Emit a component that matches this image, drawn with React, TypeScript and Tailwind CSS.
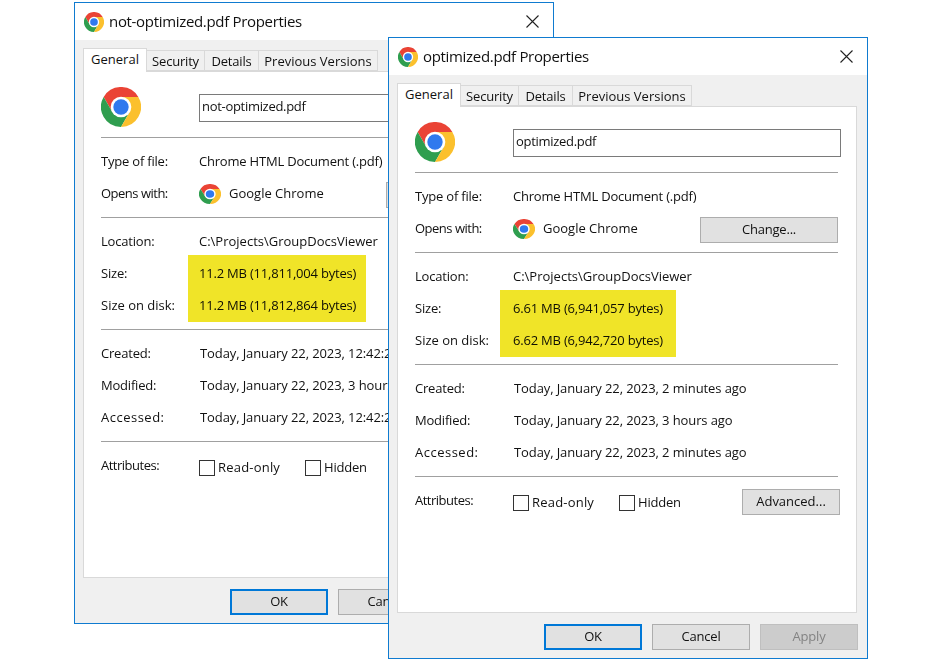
import React from "react";

function ChromeIcon({ className }: { className: string }) {
  return (
    <svg viewBox="0 0 48 48" className={className} preserveAspectRatio="none">
      <path d="M3.2 12A24 24 0 0 1 44.8 12L24 12L13.6 30Z" fill="#ea4335" />
      <path d="M3.2 12A24 24 0 0 0 24 48L34.4 30L13.6 30Z" fill="#2f9e4f" />
      <path d="M44.8 12A24 24 0 0 1 24 48L34.4 30L24 12Z" fill="#fbc02d" />
      <circle cx="24" cy="24" r="12.4" fill="#fff" />
      <circle cx="24" cy="24" r="9.2" fill="#3079ee" />
    </svg>
  );
}

function Row({
  label,
  labelClass = "",
  valueClass = "",
  children,
}: {
  label: string;
  labelClass?: string;
  valueClass?: string;
  children: React.ReactNode;
}) {
  return (
    <div className="grid h-8 grid-cols-[98px_1fr] items-center">
      <span className={labelClass}>{label}</span>
      <span className={`whitespace-nowrap ${valueClass}`}>{children}</span>
    </div>
  );
}

function Sep() {
  return <div className="h-px w-[423px] bg-[#a0a0a0]" />;
}

function WinButton({ label, className = "" }: { label: string; className?: string }) {
  return (
    <div className={`flex items-center justify-center border border-[#adadad] bg-[#e1e1e1] ${className}`}>
      {label}
    </div>
  );
}

function Checkbox({ label, className = "", textClass = "" }: { label: string; className?: string; textClass?: string }) {
  return (
    <div className={`flex items-center gap-[3px] ${className}`}>
      <span className="h-4 w-4 border border-[#333] bg-white" />
      <span className={textClass}>{label}</span>
    </div>
  );
}

type Props = {
  name: string;
  size: string;
  sizeOnDisk: string;
  created: string;
  modified: string;
  accessed: string;
  position: string;
  highlight: string;
};

function PropertiesWindow({ name, size, sizeOnDisk, created, modified, accessed, position, highlight }: Props) {
  return (
    <div className={`absolute flex h-[622px] w-[480px] flex-col border border-[#0f7bd0] bg-[#f0f0f0] font-['Open_Sans',sans-serif] text-[13px] tracking-[-0.2px] text-[#111] ${position}`}>
      {/* title bar */}
      <div className="flex h-[37px] shrink-0 items-center bg-white pl-[9px] pr-[14px]">
        <ChromeIcon className="h-5 w-5" />
        <span className="ml-[5px] text-[15px] tracking-[-0.32px]">{name} Properties</span>
        <svg viewBox="0 0 13 13" className="ml-auto h-[13px] w-[13px]" stroke="#222" strokeWidth="1.1">
          <path d="M0.5 0.5L12.5 12.5M12.5 0.5L0.5 12.5" />
        </svg>
      </div>

      {/* tabs */}
      <div className="flex h-[31px] shrink-0 items-end pl-2">
        <div className="z-10 mb-[-1px] flex h-[24px] w-[64px] items-center justify-center border border-b-0 border-[#d9d9d9] bg-white pb-[1px] tracking-[0px]">General</div>
        <div className="flex h-[21px] w-[58px] items-center justify-center border-y border-r border-[#d9d9d9] pt-[2px]">Security</div>
        <div className="flex h-[21px] w-[54px] items-center justify-center border-y border-r border-[#d9d9d9] pt-[2px]">Details</div>
        <div className="flex h-[21px] w-[119px] items-center justify-center border-y border-r border-[#d9d9d9] pt-[2px] tracking-[0px]">Previous Versions</div>
      </div>

      {/* panel */}
      <div className="relative ml-2 mr-[10px] h-[507px] shrink-0 border border-[#d9d9d9] bg-white pl-[17px] pt-[15px]">
        <div className="flex h-[40px] items-center">
          <ChromeIcon className="h-10 w-10" />
          <div className="ml-[58px] mt-[1px] flex h-[28px] w-[328px] items-center border border-[#7a7a7a] px-[2px] pb-[1px] tracking-[-0.3px]">{name}</div>
        </div>
        <div className="mt-[10px]"><Sep /></div>
        <div className="mt-[8px]">
          <Row label="Type of file:">Chrome HTML Document (.pdf)</Row>
          <div className="grid h-8 w-[423px] grid-cols-[98px_22px_1fr_138px] items-center">
            <span className="tracking-[-0.5px]">Opens with:</span>
            <ChromeIcon className="h-5 w-[22px]" />
            <span className="ml-2 whitespace-nowrap tracking-[0px]">Google Chrome</span>
            <WinButton label="Change..." className="mt-[2px] h-[26px]" />
          </div>
        </div>
        <div className="mt-[7px]"><Sep /></div>
        <div className="mt-[8px]">
          <Row label="Location:" valueClass="tracking-[0px]">C:\Projects\GroupDocsViewer</Row>
          <Row label="Size:">{size}</Row>
          <Row label="Size on disk:" labelClass="tracking-[0px]">{sizeOnDisk}</Row>
        </div>
        <div className="mt-[7px]"><Sep /></div>
        <div className="mt-[8px]">
          <Row label="Created:" valueClass="pl-px tracking-[-0.1px]">{created}</Row>
          <Row label="Modified:" valueClass="pl-px tracking-[-0.1px]">{modified}</Row>
          <Row label="Accessed:" labelClass="tracking-[0.5px]" valueClass="pl-px tracking-[-0.1px]">{accessed}</Row>
        </div>
        <div className="mt-[7px]"><Sep /></div>
        <div className="mt-[13px] flex h-[26px] items-center">
          <span className="mb-[4px] w-[98px] tracking-[-0.5px]">Attributes:</span>
          <Checkbox label="Read-only" className="w-[106px]" textClass="tracking-[0.2px]" />
          <Checkbox label="Hidden" className="w-[123px]" />
          <WinButton label="Advanced..." className="mb-[2px] h-[26px] w-[98px] tracking-[0px]" />
        </div>
        {/* marker over the two size rows */}
        <div className={`absolute h-[67px] bg-[#f0e428] mix-blend-multiply ${highlight}`} />
      </div>

      {/* footer */}
      <div className="mr-[9px] mt-[11px] flex justify-end gap-[10px]">
        <WinButton label="OK" className="h-[26px] w-[98px] !border-2 !border-[#0078d7]" />
        <WinButton label="Cancel" className="h-[26px] w-[98px]" />
        <WinButton label="Apply" className="h-[26px] w-[98px] !border-[#bfbfbf] !bg-[#cccccc] text-[#838383]" />
      </div>
    </div>
  );
}

export default function App() {
  return (
    <div className="relative h-[660px] w-[950px] overflow-hidden bg-white">
      <PropertiesWindow
        name="not-optimized.pdf"
        size="11.2 MB (11,811,004 bytes)"
        sizeOnDisk="11.2 MB (11,812,864 bytes)"
        created="Today, January 22, 2023, 12:42:27 PM"
        modified="Today, January 22, 2023, 3 hours ago"
        accessed="Today, January 22, 2023, 12:42:27 PM"
        position="left-[74px] top-[2px]"
        highlight="left-[104px] top-[183px] w-[178px]"
      />
      <PropertiesWindow
        name="optimized.pdf"
        size="6.61 MB (6,941,057 bytes)"
        sizeOnDisk="6.62 MB (6,942,720 bytes)"
        created="Today, January 22, 2023, 2 minutes ago"
        modified="Today, January 22, 2023, 3 hours ago"
        accessed="Today, January 22, 2023, 2 minutes ago"
        position="left-[388px] top-[37px]"
        highlight="left-[102px] top-[183px] w-[176px]"
      />
    </div>
  );
}
